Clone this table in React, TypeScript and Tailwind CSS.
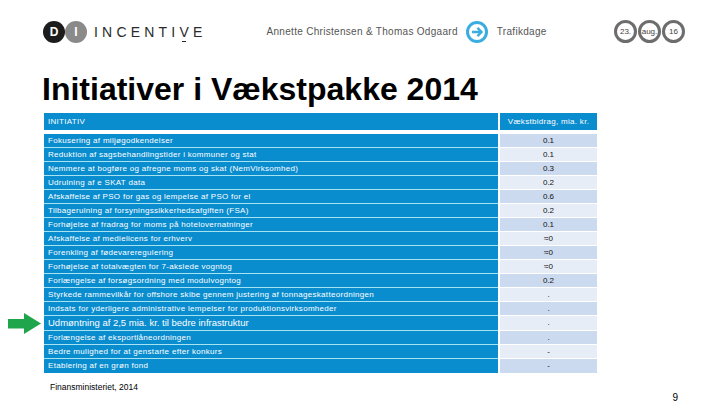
import type { ReactNode } from "react";

type Row = { text: string; value: string; big?: boolean };

const ROWS: Row[] = [
  { text: "Fokusering af miljøgodkendelser", value: "0.1" },
  { text: "Reduktion af sagsbehandlingstider i kommuner og stat", value: "0.1" },
  { text: "Nemmere at bogføre og afregne moms og skat (NemVirksomhed)", value: "0.3" },
  { text: "Udrulning af e SKAT data", value: "0.2" },
  { text: "Afskaffelse af PSO for gas og lempelse af PSO for el", value: "0.6" },
  { text: "Tilbagerulning af forsyningssikkerhedsafgiften (FSA)", value: "0.2" },
  { text: "Forhøjelse af fradrag for moms på hotelovernatninger", value: "0.1" },
  { text: "Afskaffelse af medielicens for erhverv", value: "≈0" },
  { text: "Forenkling af fødevareregulering", value: "≈0" },
  { text: "Forhøjelse af totalvægten for 7-akslede vogntog", value: "≈0" },
  { text: "Forlængelse af forsøgsordning med modulvogntog", value: "0.2" },
  { text: "Styrkede rammevilkår for offshore skibe gennem justering af tonnageskatteordningen", value: "." },
  { text: "Indsats for yderligere administrative lempelser for produktionsvirksomheder", value: "." },
  { text: "Udmøntning af 2,5 mia. kr. til bedre infrastruktur", value: ".", big: true },
  { text: "Forlængelse af eksportlåneordningen", value: "." },
  { text: "Bedre mulighed for at genstarte efter konkurs", value: "-" },
  { text: "Etablering af en grøn fond", value: "-" },
];

function DateDot({ children }: { children: ReactNode }) {
  return (
    <div className="w-[23px] h-[23px] rounded-full border-[3px] border-[#6d6d6d] flex items-center justify-center text-[8px] text-[#444] leading-none">
      {children}
    </div>
  );
}

function Logo() {
  return (
    <div className="flex items-center">
      <div className="w-[22px] h-[22px] rounded-full bg-[#1c1c1c] flex items-center justify-center text-white text-[12px] font-bold leading-none">
        D
      </div>
      <div className="w-[22px] h-[22px] rounded-full bg-[#8a8a8a] flex items-center justify-center text-white text-[12px] font-bold leading-none">
        I
      </div>
      <div className="ml-[7px] text-[14px] leading-none tracking-[4.2px] text-[#2a2a2a] flex items-center">
        INCENTI
        <span className="relative inline-block">
          V
          <span className="absolute left-[3px] right-[7px] -bottom-[3px] h-[1px] bg-[#2a2a2a]" />
        </span>
        E
      </div>
    </div>
  );
}

function GreenArrow() {
  return (
    <svg width="33" height="21" viewBox="0 0 33 21" className="-my-[4px] shrink-0">
      <polygon points="0,6 16,6 16,0 33,10.5 16,21 16,15.5 0,15.5" fill="#1fa64c" />
    </svg>
  );
}

export default function App() {
  return (
    <div
      className="w-[720px] h-[405px] bg-white overflow-hidden flex flex-col"
      style={{ fontFamily: '"Liberation Sans", Arial, sans-serif' }}
    >
      {/* top bar */}
      <div className="h-[64px] flex items-center pl-[43px] pr-[35px]">
        <Logo />
        <div className="ml-[60px] text-[10px] text-[#555] tracking-[0.3px]">
          Annette Christensen &amp; Thomas Odgaard
        </div>
        <svg width="22" height="22" viewBox="0 0 22 22" className="ml-[8px]">
          <circle cx="11" cy="11" r="9.5" fill="white" stroke="#39ace0" strokeWidth="3" />
          <path d="M6 11H15.5M11.5 6.8L15.5 11L11.5 15.2" fill="none" stroke="#39ace0" strokeWidth="2.4" />
        </svg>
        <div className="ml-[9px] text-[10px] text-[#555] tracking-[0.3px]">Trafikdage</div>
        <div className="ml-auto flex gap-[1px]">
          <DateDot>23.</DateDot>
          <DateDot>aug.</DateDot>
          <DateDot>16</DateDot>
        </div>
      </div>

      <h1 className="mt-[10px] pl-[42px] text-[32px] leading-[32px] font-bold text-black">
        Initiativer i Vækstpakke 2014
      </h1>

      {/* table */}
      <div className="mt-[8px] flex flex-col">
        <div className="flex h-[17px] pl-[44px]">
          <div className="w-[454px] bg-[#0a8dcf] text-white text-[8px] tracking-[0.3px] pl-[4px] pt-[3px]">
            INITIATIV
          </div>
          <div className="ml-[2px] w-[97px] bg-[#0a8dcf] text-white text-[8px] tracking-[0.3px] text-center pt-[3px]">
            Vækstbidrag, mia. kr.
          </div>
        </div>
        <div className="h-[4px]" />
        {ROWS.map((r, i) => {
          const last = i === ROWS.length - 1;
          return (
            <div key={i} className={`flex ${r.big ? "h-[15px]" : "h-[14px]"}`}>
              <div className="w-[44px] flex items-center justify-end pr-[3px]">
                {r.big && <GreenArrow />}
              </div>
              <div
                className={`w-[454px] bg-[#0a8dcf] text-white flex items-center pl-[4px] whitespace-nowrap ${
                  last ? "" : "border-b border-[#a6e3f1]"
                } ${r.big ? "text-[9.5px]" : "text-[8px] tracking-[0.3px]"}`}
              >
                {r.text}
              </div>
              <div
                className={`ml-[2px] w-[97px] flex items-center justify-center text-[8px] text-[#111] ${
                  last ? "" : "border-b border-white"
                } ${i % 2 === 0 ? "bg-[#cbdaee]" : "bg-[#e6edf7]"}`}
              >
                {r.value}
              </div>
            </div>
          );
        })}
      </div>

      {/* footer */}
      <div className="flex items-start pr-[42px]">
        <div className="mt-[8px] pl-[50px] text-[8.5px] text-black">Finansministeriet, 2014</div>
        <div className="ml-auto mt-[17px] text-[10px] text-black">9</div>
      </div>
    </div>
  );
}
